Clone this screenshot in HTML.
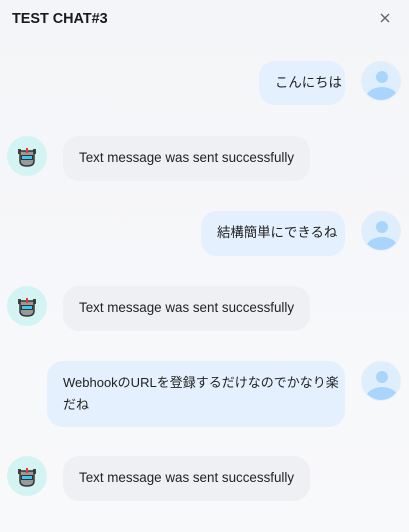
<!DOCTYPE html>
<html><head><meta charset="utf-8"><style>
body{margin:0;width:409px;height:532px;background:linear-gradient(#f4f5f8,#f8f9fb);font-family:"Liberation Sans","Noto Sans CJK JP",sans-serif;color:#222;position:relative;overflow:hidden}
.t{position:absolute;left:12px;top:11px;font-weight:bold;font-size:14.4px;color:#1a1a1a}
.x{position:absolute;left:379px;top:12px}
.b{position:absolute;font-size:13.4px;line-height:22px;padding:11px 16px;border-radius:16px;box-sizing:border-box;white-space:nowrap}
.u{background:#e4f0fd}
.r{background:#eff0f3}
.av{position:absolute;width:40px;height:40px;border-radius:50%;overflow:hidden}
.ua{background:#dfeefc;border:1px solid #e8eef5;box-sizing:border-box}
.ba{background:#d4f3f3}
</style></head><body>
<div class="t">TEST CHAT#3</div>
<svg class="x" width="12" height="12"><path d="M2 2L10 10M10 2L2 10" stroke="#666" stroke-width="1.4"/></svg>

<div class="b u" style="left:259px;top:61px;width:86px;height:44px">こんにちは</div>
<div class="av ua" style="left:361px;top:61px"><svg width="40" height="40"><circle cx="20" cy="15" r="6" fill="#a9d4fc"/><ellipse cx="20" cy="36" rx="16" ry="11" fill="#a9d4fc"/></svg></div>

<div class="av ba" style="left:7px;top:136px"><svg width="40" height="40"><rect x="11" y="13" width="3" height="5" fill="#444"/><rect x="26" y="13" width="3" height="5" fill="#444"/><path d="M13 15h14v10q0 5-7 5t-7-5z" fill="#999" stroke="#333" stroke-width="1.5"/><rect x="19" y="12" width="2" height="5" fill="#e33"/><rect x="14" y="19" width="12" height="5" fill="#333"/><rect x="15" y="20" width="10" height="3" fill="#3cc8f0"/></svg></div>
<div class="b r" style="left:63px;top:136px;width:247px;height:45px">Text message was sent successfully</div>

<div class="b u" style="left:201px;top:211px;width:144px;height:45px">結構簡単にできるね</div>
<div class="av ua" style="left:361px;top:211px"><svg width="40" height="40"><circle cx="20" cy="15" r="6" fill="#a9d4fc"/><ellipse cx="20" cy="36" rx="16" ry="11" fill="#a9d4fc"/></svg></div>

<div class="av ba" style="left:7px;top:286px"><svg width="40" height="40"><rect x="11" y="13" width="3" height="5" fill="#444"/><rect x="26" y="13" width="3" height="5" fill="#444"/><path d="M13 15h14v10q0 5-7 5t-7-5z" fill="#999" stroke="#333" stroke-width="1.5"/><rect x="19" y="12" width="2" height="5" fill="#e33"/><rect x="14" y="19" width="12" height="5" fill="#333"/><rect x="15" y="20" width="10" height="3" fill="#3cc8f0"/></svg></div>
<div class="b r" style="left:63px;top:286px;width:247px;height:45px">Text message was sent successfully</div>

<div class="b u" style="left:47px;top:361px;width:298px;height:66px;font-size:13px">WebhookのURLを登録するだけなのでかなり楽<br>だね</div>
<div class="av ua" style="left:361px;top:361px"><svg width="40" height="40"><circle cx="20" cy="15" r="6" fill="#a9d4fc"/><ellipse cx="20" cy="36" rx="16" ry="11" fill="#a9d4fc"/></svg></div>

<div class="av ba" style="left:7px;top:456px"><svg width="40" height="40"><rect x="11" y="13" width="3" height="5" fill="#444"/><rect x="26" y="13" width="3" height="5" fill="#444"/><path d="M13 15h14v10q0 5-7 5t-7-5z" fill="#999" stroke="#333" stroke-width="1.5"/><rect x="19" y="12" width="2" height="5" fill="#e33"/><rect x="14" y="19" width="12" height="5" fill="#333"/><rect x="15" y="20" width="10" height="3" fill="#3cc8f0"/></svg></div>
<div class="b r" style="left:63px;top:456px;width:247px;height:45px">Text message was sent successfully</div>
</body></html>
